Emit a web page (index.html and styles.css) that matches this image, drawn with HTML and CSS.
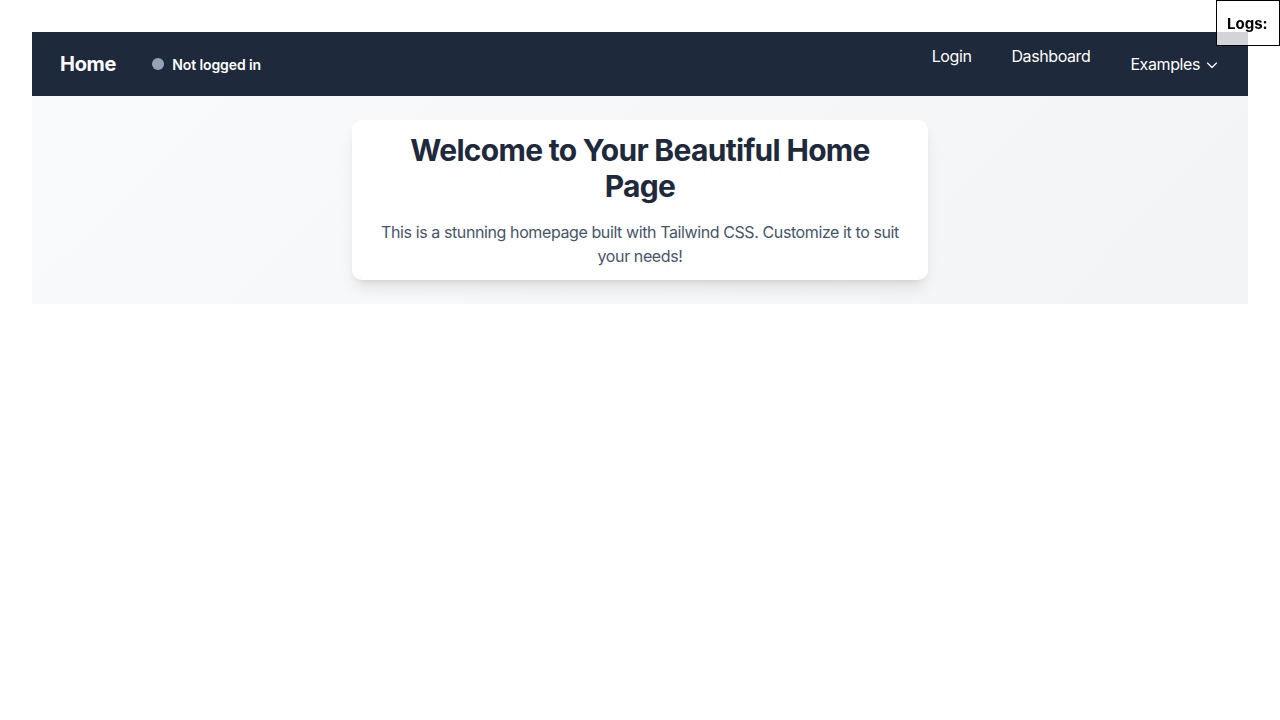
FILE: index.html
```html
<!DOCTYPE html>
<html lang="en">
<head>
<meta charset="utf-8">
<title>Home</title>
<link rel="stylesheet" href="styles.css">
</head>
<body>
<div class="page">
  <nav class="nav">
    <div class="nav-left">
      <a class="brand" href="#">Home</a>
      <div class="status"><span class="dot"></span><span class="status-text">Not logged in</span></div>
    </div>
    <ul class="nav-links">
      <li><a class="nav-link" href="#">Login</a></li>
      <li><a class="nav-link" href="#">Dashboard</a></li>
      <li><button class="nav-drop" type="button">Examples
        <svg class="chev" width="12" height="12" viewBox="0 0 12 12" fill="none" stroke="currentColor" stroke-width="1.2" stroke-linecap="round" stroke-linejoin="round"><path d="M1.5 4l4.5 4.5L10.5 4"/></svg>
      </button></li>
    </ul>
  </nav>
  <section class="hero">
    <div class="card">
      <h1 class="title">Welcome to Your Beautiful Home Page</h1>
      <p class="lead">This is a stunning homepage built with Tailwind CSS. Customize it to suit your needs!</p>
    </div>
  </section>
</div>
<div class="logs"><strong>Logs:</strong></div>
</body>
</html>
```
FILE: styles.css
```css
* { box-sizing: border-box; }
html, body { margin: 0; padding: 0; }
body {
  font-family: Inter, "Noto Sans", "Liberation Sans", sans-serif;
  background: #ffffff;
  color: #1e293b;
}
.page { padding: 32px; }
.nav {
  background: #1e293b;
  height: 64px;
  display: flex;
  justify-content: space-between;
  align-items: flex-start;
  padding: 0 10px 0 28px;
}
.nav-left {
  display: flex;
  align-items: center;
  height: 64px;
  gap: 36px;
}
.brand {
  color: #ffffff;
  font-weight: 700;
  font-size: 20px;
  text-decoration: none;
  letter-spacing: -0.3px;
}
.status { display: flex; align-items: center; gap: 8px; }
.dot {
  width: 12px; height: 12px; border-radius: 50%;
  background: #94a3b8;
}
.status-text { color: #ffffff; font-size: 14px; font-weight: 600; letter-spacing: -0.1px; }
.nav-links {
  list-style: none;
  margin: 0; padding: 0;
  display: flex;
  align-items: flex-start;
}
.nav-link {
  display: block;
  color: #ffffff;
  text-decoration: none;
  font-size: 16px;
  line-height: 24px;
  letter-spacing: -0.4px;
  padding: 12px 20px;
}
.nav-drop {
  display: flex;
  align-items: center;
  gap: 6px;
  background: none;
  border: 0;
  color: #ffffff;
  font: inherit;
  font-size: 16px;
  line-height: 24px;
  letter-spacing: -0.4px;
  padding: 20px 20px;
  cursor: pointer;
}
.chev { margin-top: 1px; }
.hero {
  background: linear-gradient(135deg, #f8fafc, #f3f4f6);
  padding: 24px 0;
  display: flex;
  justify-content: center;
}
.card {
  width: 576px;
  background: #ffffff;
  border-radius: 10px;
  box-shadow: 0 10px 15px -3px rgba(0,0,0,0.1), 0 4px 6px -4px rgba(0,0,0,0.1);
  padding: 12px 24px;
  text-align: center;
}
.title {
  margin: 0;
  font-size: 30px;
  line-height: 36px;
  font-weight: 700;
  color: #1e293b;
  letter-spacing: -0.7px;
}
.lead {
  margin: 16px 0 0;
  font-size: 16px;
  line-height: 24px;
  letter-spacing: -0.4px;
  color: #475569;
}
.logs {
  position: fixed;
  top: 0; right: 0;
  width: 64px;
  height: 46px;
  border: 1px solid #000000;
  background: rgba(255,255,255,0.8);
  padding: 13px 0 0 10px;
  font-size: 15px;
  line-height: 20px;
  color: #000000;
}
```
